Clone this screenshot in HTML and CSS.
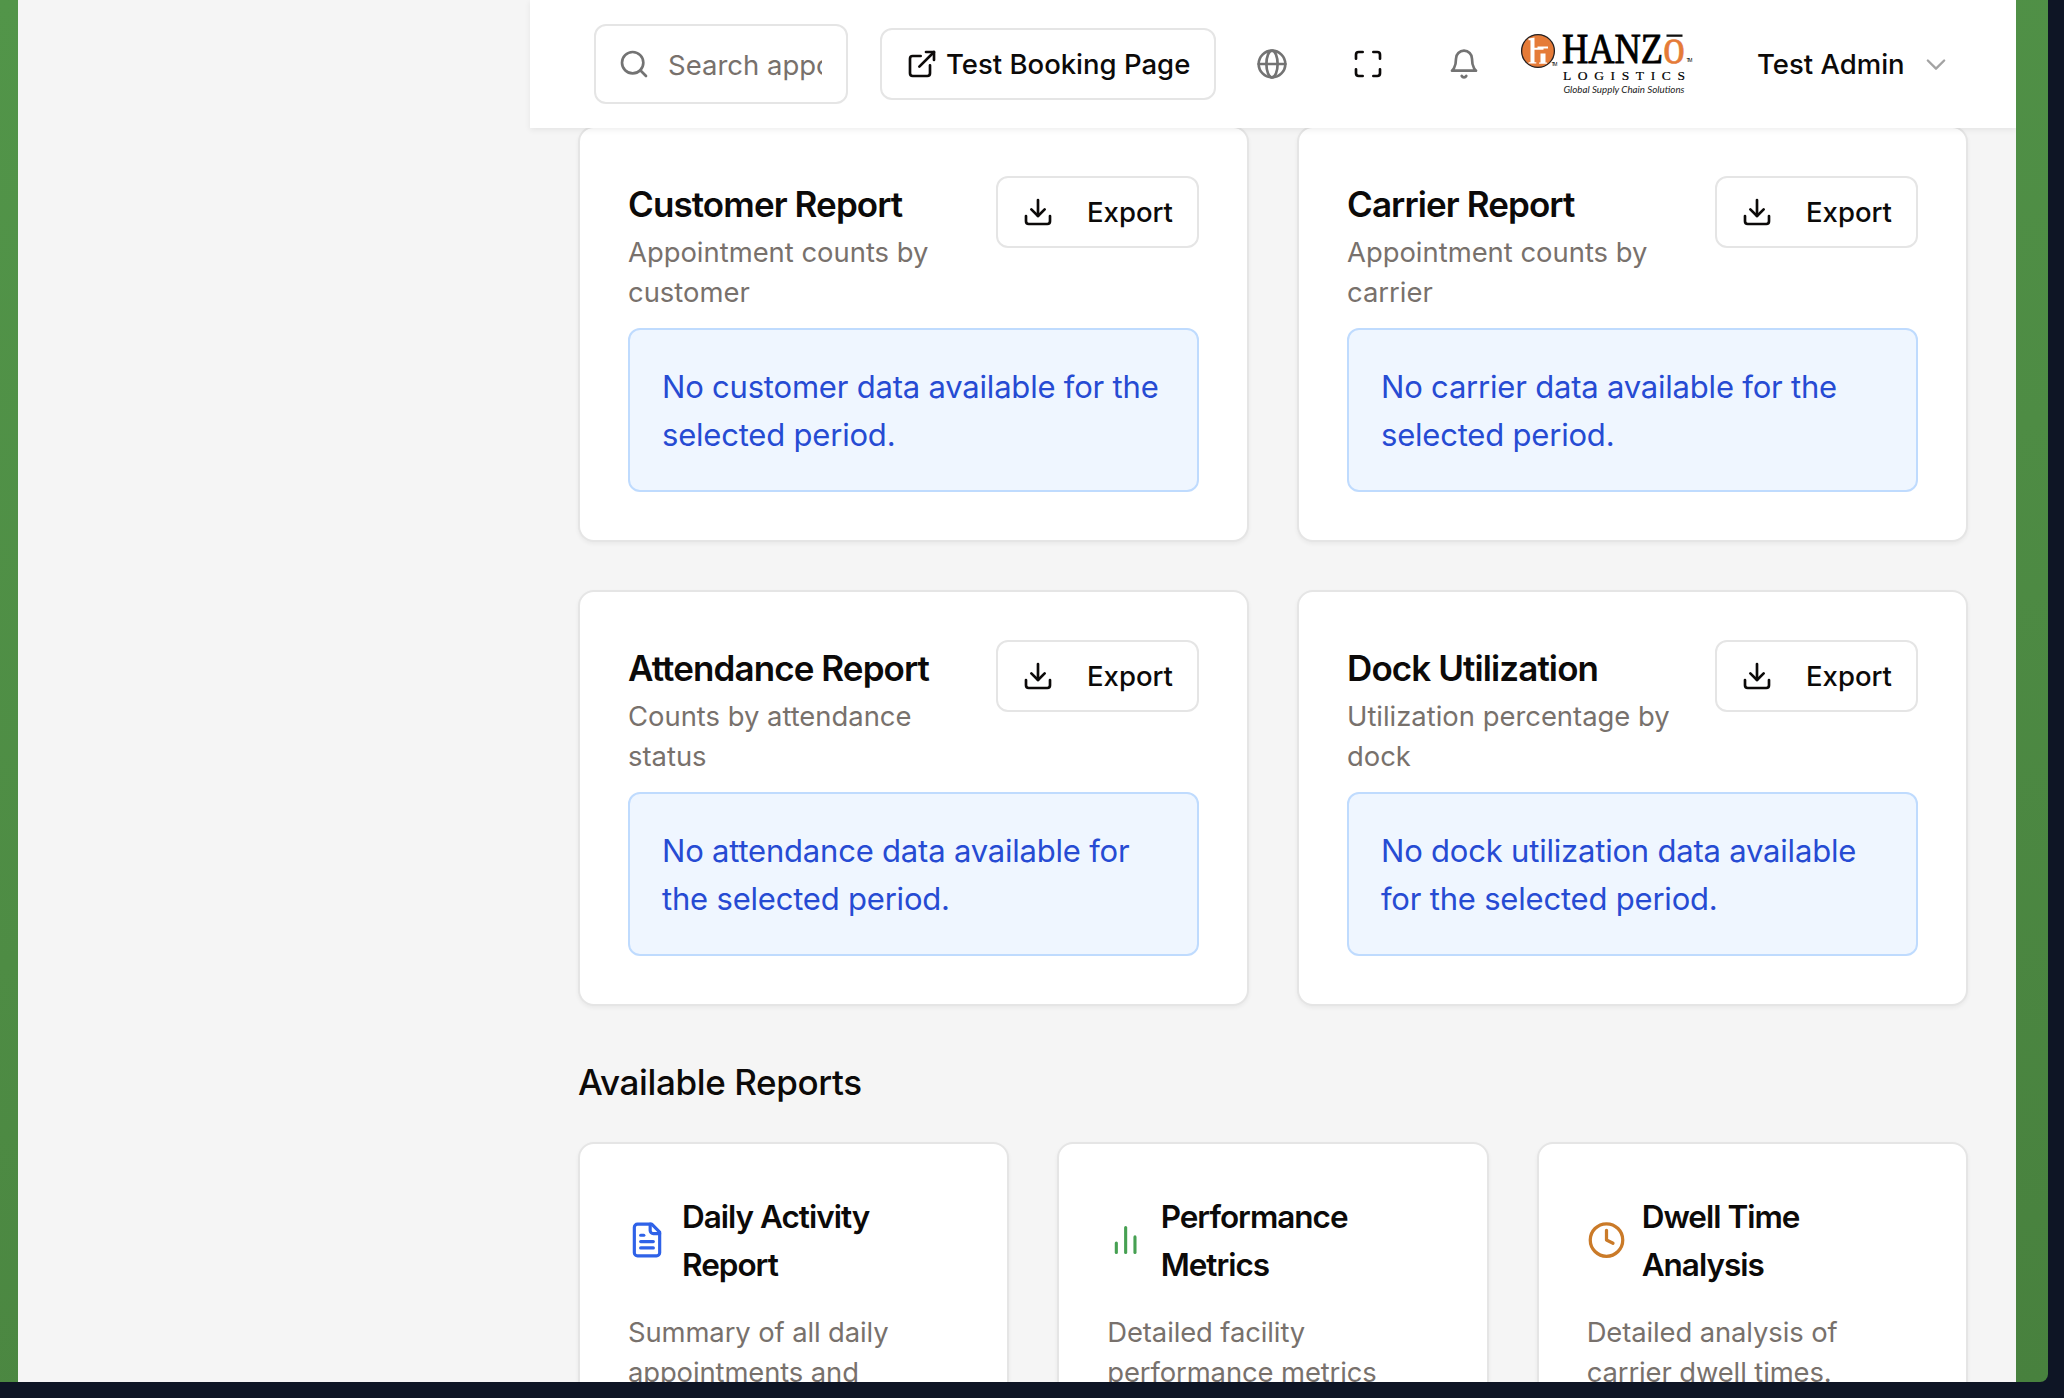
FILE: index.html
```html
<!DOCTYPE html>
<html lang="en">
<head>
<meta charset="utf-8">
<title>Reports</title>
<link rel="stylesheet" href="styles.css">
</head>
<body>
<svg class="sprite" xmlns="http://www.w3.org/2000/svg">
  <symbol id="download" viewBox="0 0 24 24"><path d="M21 15v4a2 2 0 0 1-2 2H5a2 2 0 0 1-2-2v-4"/><path d="m7 10 5 5 5-5"/><path d="M12 15V3"/></symbol>
</svg>
<div class="desktop">
<div class="window">
<div class="app">
  <aside class="sidebar"></aside>
  <div class="main">
    <header class="topbar">
      <div class="search">
        <svg class="icon" viewBox="0 0 24 24"><circle cx="11" cy="11" r="8"/><path d="m21 21-4.3-4.3"/></svg>
        <span class="search-text">Search appointments</span>
      </div>
      <button class="btn booking">
        <svg class="icon" viewBox="0 0 24 24"><path d="M15 3h6v6"/><path d="M10 14 21 3"/><path d="M18 13v6a2 2 0 0 1-2 2H5a2 2 0 0 1-2-2V8a2 2 0 0 1 2-2h6"/></svg>
        <span>Test Booking Page</span>
      </button>
      <div class="tools">
        <span class="tool muted"><svg class="icon" viewBox="0 0 24 24"><circle cx="12" cy="12" r="10"/><ellipse cx="12" cy="12" rx="4.2" ry="10"/><path d="M2 12h20"/></svg></span>
        <span class="tool"><svg class="icon" viewBox="0 0 24 24"><path d="M8 3H5a2 2 0 0 0-2 2v3"/><path d="M21 8V5a2 2 0 0 0-2-2h-3"/><path d="M3 16v3a2 2 0 0 0 2 2h3"/><path d="M16 21h3a2 2 0 0 0 2-2v-3"/></svg></span>
        <span class="tool muted"><svg class="icon" viewBox="0 0 24 24"><path d="M6 8a6 6 0 0 1 12 0c0 7 3 9 3 9H3s3-2 3-9"/><path d="M10.3 21a1.94 1.94 0 0 0 3.4 0"/></svg></span>
      </div>
      <svg class="logo" viewBox="0 0 176 72">
        <circle cx="18" cy="23" r="16.400" fill="#e57b38" stroke="#231f20" stroke-width="1.300"/>
        <path fill="#fff" d="M8.500 10.500l6-1v10.300h9v2h-9v12.500h1.800v1.200H8.600v-1.200h1.900V12.300H8.500zM20.500 25.500h5v9h1.600v1.200h-8v-1.200h1.400zM17.500 18.400h10.500v2H17.500z"/>
        <text class="logo-tm" x="31.500" y="38" textLength="6">TM</text>
        <text class="logo-name" x="42" y="34.700" textLength="101" lengthAdjust="spacingAndGlyphs">HANZ</text>
        <text class="logo-o" x="143" y="34.700" textLength="22" lengthAdjust="spacingAndGlyphs">o</text>
        <path fill="#111" d="M146.500 6.500h16v2.300h-16z"/>
        <text class="logo-tm" x="166.500" y="34" textLength="6">TM</text>
        <text class="logo-sub" x="43" y="52" textLength="122">LOGISTICS</text>
        <text class="logo-tag" x="43.500" y="64.500" textLength="121" lengthAdjust="spacingAndGlyphs">Global Supply Chain Solutions</text>
      </svg>
      <div class="user">
        <span>Test Admin</span>
        <svg class="icon chevron" viewBox="0 0 24 24"><path d="m5 9 7 7 7-7"/></svg>
      </div>
    </header>

    <main class="content">
      <section class="reports">
        <article class="card">
          <div class="card-head">
            <div class="card-text"><h3>Customer Report</h3><p>Appointment counts by<br>customer</p></div>
            <button class="btn export"><svg class="icon"><use href="#download"/></svg><span>Export</span></button>
          </div>
          <div class="notice">No customer data available for the<br>selected period.</div>
        </article>
        <article class="card">
          <div class="card-head">
            <div class="card-text"><h3>Carrier Report</h3><p>Appointment counts by<br>carrier</p></div>
            <button class="btn export"><svg class="icon"><use href="#download"/></svg><span>Export</span></button>
          </div>
          <div class="notice">No carrier data available for the<br>selected period.</div>
        </article>
        <article class="card">
          <div class="card-head">
            <div class="card-text"><h3>Attendance Report</h3><p>Counts by attendance<br>status</p></div>
            <button class="btn export"><svg class="icon"><use href="#download"/></svg><span>Export</span></button>
          </div>
          <div class="notice">No attendance data available for<br>the selected period.</div>
        </article>
        <article class="card">
          <div class="card-head">
            <div class="card-text"><h3>Dock Utilization</h3><p>Utilization percentage by<br>dock</p></div>
            <button class="btn export"><svg class="icon"><use href="#download"/></svg><span>Export</span></button>
          </div>
          <div class="notice">No dock utilization data available<br>for the selected period.</div>
        </article>
      </section>

      <h2 class="section-title">Available Reports</h2>
      <section class="available">
        <article class="card tile">
          <div class="tile-head">
            <svg class="icon tile-icon file" viewBox="0 0 24 24"><path d="M15 2H6a2 2 0 0 0-2 2v16a2 2 0 0 0 2 2h12a2 2 0 0 0 2-2V7Z"/><path d="M14 2v4a2 2 0 0 0 2 2h4"/><path d="M10 9H8"/><path d="M16 13H8"/><path d="M16 17H8"/></svg>
            <h4>Daily Activity<br>Report</h4>
          </div>
          <p>Summary of all daily<br>appointments and</p>
        </article>
        <article class="card tile">
          <div class="tile-head">
            <svg class="icon tile-icon bars" viewBox="0 0 24 24"><path d="M18 20V10"/><path d="M12 20V4"/><path d="M6 20v-6"/></svg>
            <h4>Performance<br>Metrics</h4>
          </div>
          <p>Detailed facility<br>performance metrics</p>
        </article>
        <article class="card tile">
          <div class="tile-head">
            <svg class="icon tile-icon clock" viewBox="0 0 24 24"><circle cx="12" cy="12" r="10"/><path d="M12 6v6l4 2"/></svg>
            <h4>Dwell Time<br>Analysis</h4>
          </div>
          <p>Detailed analysis of<br>carrier dwell times.</p>
        </article>
      </section>
    </main>
  </div>
</div>
</div>
</div>
</body>
</html>
```
FILE: styles.css
```css
* { box-sizing: border-box; margin: 0; padding: 0; }
body {
  font-family: Inter, "Liberation Sans", sans-serif;
  color: #0c0a09;
  overflow: hidden;
}
.sprite { display: none; }
.desktop {
  width: 2064px;
  height: 1398px;
  background: #0e1525;
  padding: 0 16px 16px 0;
}
.window {
  height: 1382px;
  padding: 0 32px 0 18px;
  background: linear-gradient(165deg, #529549 0%, #4e8c44 50%, #48813e 100%);
  border-bottom-right-radius: 8px;
  overflow: hidden;
}
.app {
  display: flex;
  height: 100%;
  background: #f5f5f5;
  overflow: hidden;
}
.sidebar { width: 512px; flex: none; }
.main {
  width: 1486px;
  display: flex;
  flex-direction: column;
}
.icon {
  width: 32px;
  height: 32px;
  flex: none;
  fill: none;
  stroke: currentColor;
  stroke-width: 2;
  stroke-linecap: round;
  stroke-linejoin: round;
}

.topbar {
  position: relative;
  z-index: 1;
  flex: none;
  height: 128px;
  display: flex;
  align-items: center;
  padding: 0 64px;
  background: #fff;
  box-shadow: 0 2px 6px rgba(0, 0, 0, .07);
}
.search {
  width: 254px;
  height: 80px;
  flex: none;
  display: flex;
  align-items: center;
  gap: 18px;
  padding: 0 24px 0 22px;
  border: 2px solid #e5e5e5;
  border-radius: 12px;
  color: #737373;
}
.search-text {
  flex: 1;
  overflow: hidden;
  white-space: nowrap;
  padding-top: 2px;
  font-size: 27.500px;
  line-height: 40px;
  color: #78716c;
}
.btn {
  display: flex;
  align-items: center;
  height: 72px;
  flex: none;
  border: 2px solid #e5e5e5;
  border-radius: 12px;
  background: #fff;
  color: #0c0a09;
  font: 500 27.500px/40px Inter, "Liberation Sans", sans-serif;
  white-space: nowrap;
}
.booking { width: 336px; margin-left: 32px; padding-left: 24px; gap: 8px; }
.tools { display: flex; margin-left: 20px; }
.tool {
  width: 72px;
  height: 72px;
  margin-right: 24px;
  display: flex;
  align-items: center;
  justify-content: center;
}
.muted { color: #737373; }
.logo { width: 176px; height: 72px; flex: none; margin: 0 0 0 -4px; overflow: visible; }
.logo-tm { font: 5px "Liberation Sans", sans-serif; }
.logo-name { font: 42px "Liberation Serif", serif; stroke: #000; stroke-width: .9px; }
.logo-o { font: 51px "Liberation Serif", serif; fill: #e57b38; stroke: #e57b38; stroke-width: .6px; }
.logo-sub { font: 13.500px "Liberation Serif", serif; stroke: #000; stroke-width: .2px; }
.logo-tag { font: italic 9px Lato, sans-serif; fill: #222; }
.user {
  display: flex;
  align-items: center;
  margin-left: 61px;
  gap: 17px;
  font-size: 27.500px;
  line-height: 40px;
  font-weight: 500;
  white-space: nowrap;
}
.chevron { color: #a3a3a3; width: 28px; height: 28px; }

.content { padding: 0 48px; margin-top: -2px; }
.reports { display: grid; grid-template-columns: repeat(2, minmax(0, 1fr)); gap: 48px; }
.card {
  background: #fff;
  border: 2px solid #e5e5e5;
  border-radius: 16px;
  padding: 48px;
  box-shadow: 0 2px 4px rgba(0, 0, 0, .05);
}
.card-head { display: flex; justify-content: space-between; height: 136px; margin-bottom: 16px; white-space: nowrap; }
.card-text { padding-top: 10px; }
.card h3 {
  margin-bottom: 10px;
  font-size: 35px;
  line-height: 36px;
  font-weight: 600;
  letter-spacing: -.9px;
}
.card p { font-size: 27.400px; line-height: 40px; color: #78716c; white-space: nowrap; }
.card.tile p { letter-spacing: -.1px; }
.export { width: 203px; padding-left: 24px; gap: 33px; }
.notice {
  height: 164px;
  padding: 33px 32px 31px;
  border: 2px solid #bfdbfe;
  border-radius: 12px;
  background: #eff6ff;
  color: #264bd3;
  font-size: 31px;
  line-height: 48px;
  letter-spacing: -.2px;
  white-space: nowrap;
}
.section-title {
  margin: 48px 0 32px;
  font-size: 35px;
  line-height: 56px;
  font-weight: 500;
  letter-spacing: -.38px;
}
.available { display: grid; grid-template-columns: repeat(3, minmax(0, 1fr)); gap: 48px; }
.tile { height: 400px; }
.tile-head { display: flex; align-items: center; gap: 16px; margin-bottom: 24px; white-space: nowrap; }
.tile h4 { padding-top: 1px; margin-bottom: -1px; font-size: 31.500px; line-height: 48px; font-weight: 600; letter-spacing: -1px; }
.tile-icon { height: 40px; }
.file { width: 38px; color: #2f62e8; }
.bars { width: 37.300px; color: #46a052; }
.clock { width: 39px; color: #ca7a28; }
```
